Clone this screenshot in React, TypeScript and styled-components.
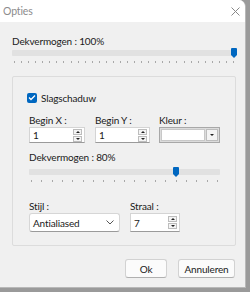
import React from 'react';
import styled, { createGlobalStyle } from 'styled-components';

const Global = createGlobalStyle`
  html, body {
    margin: 0;
    padding: 0;
    background: #9a9a9a;
    font-family: Lato, "Liberation Sans", sans-serif;
    font-size: 10px;
    letter-spacing: -0.15px;
    color: #1a1a1a;
  }
`;

const Window = styled.div`
  width: 246px;
  height: 288px;
  background: #f0f0f0;
  border-right: 1px solid #b8b8b8;
  border-bottom: 1px solid #b8b8b8;
  border-top-right-radius: 7px;
  overflow: hidden;
  display: flex;
  flex-direction: column;
  box-sizing: border-box;
`;

const TitleBar = styled.div`
  height: 22px;
  background: #ffffff;
  display: flex;
  align-items: center;
  justify-content: space-between;
  padding: 0 5px 0 3px;
  flex-shrink: 0;
`;

const Title = styled.span`
  color: #8c8c8c;
  font-size: 10.5px;
`;

const Body = styled.div`
  flex: 1;
  display: flex;
  flex-direction: column;
  padding: 13px 0 0 12px;
`;

const Label = styled.div<{ $top?: number }>`
  font-size: 10px;
  line-height: 13px;
  white-space: nowrap;
  margin-top: ${p => p.$top ?? 0}px;
`;

const SliderWrap = styled.div<{ $width: number; $top: number }>`
  position: relative;
  width: ${p => p.$width}px;
  height: 17px;
  margin-top: ${p => p.$top}px;
`;

const Track = styled.div`
  position: absolute;
  left: 0;
  right: 0;
  top: 2px;
  height: 6px;
  background: #e1e1e1;
  border-radius: 1px;
`;

const Ticks = styled.div`
  position: absolute;
  left: 2px;
  right: 2px;
  top: 13px;
  height: 2px;
  display: flex;
  justify-content: space-between;
`;

const Tick = styled.span`
  width: 1px;
  height: 2px;
  background: #a8a8a8;
`;

const Thumb = styled.div`
  position: absolute;
  top: 0;
  width: 6px;
  height: 10px;
  background: #0067c0;
  clip-path: polygon(0 0, 100% 0, 100% 70%, 50% 100%, 0 70%);
  border-radius: 1px;
`;

function Slider({ width, ticks, pos, top }: { width: number; ticks: number; pos: number; top: number }) {
  return (
    <SliderWrap $width={width} $top={top}>
      <Track />
      <Ticks>
        {Array(ticks).fill(null).map((_, i) => <Tick key={i} />)}
      </Ticks>
      <Thumb style={{ left: pos }} />
    </SliderWrap>
  );
}

const Group = styled.fieldset`
  margin: 11px 0 0 0;
  width: 224px;
  height: 170px;
  box-sizing: border-box;
  border: 1px solid #dcdcdc;
  border-radius: 2px;
  padding: 14px 0 0 16px;
  display: flex;
  flex-direction: column;
`;

const CheckRow = styled.label`
  display: flex;
  align-items: center;
  gap: 4px;
  margin-left: -2px;
  height: 13px;
  font-size: 10px;
`;

const CheckBox = styled.span`
  width: 10px;
  height: 10px;
  border-radius: 2px;
  background: #0067c0;
  display: flex;
  align-items: center;
  justify-content: center;
`;

const Row = styled.div<{ $top: number }>`
  display: flex;
  margin-top: ${p => p.$top}px;
`;

const Field = styled.div<{ $width: number; $gap: number }>`
  width: ${p => p.$width}px;
  margin-right: ${p => p.$gap}px;
  display: flex;
  flex-direction: column;
`;

const InputBox = styled.div<{ $height: number }>`
  height: ${p => p.$height}px;
  box-sizing: border-box;
  background: #ffffff;
  border: 1px solid #d4d4d4;
  border-bottom-color: #9a9a9a;
  display: flex;
  align-items: center;
  justify-content: space-between;
  padding-left: 3px;
`;

const SpinButtons = styled.div`
  display: flex;
  flex-direction: column;
  gap: 1px;
  margin-right: 2px;
`;

const SpinBtn = styled.span`
  width: 5px;
  height: 4px;
  border: 1px solid #bdbdbd;
  background: #f4f4f4;
  padding: 0 1px;
  display: flex;
  align-items: center;
  justify-content: center;
`;

const Arrow = styled.span<{ $up: boolean }>`
  width: 0;
  height: 0;
  border-left: 2px solid transparent;
  border-right: 2px solid transparent;
  ${p => p.$up ? 'border-bottom: 2px solid #222;' : 'border-top: 2px solid #222;'}
`;

function Spin({ value, height }: { value: string; height: number }) {
  return (
    <InputBox $height={height}>
      <span>{value}</span>
      <SpinButtons>
        <SpinBtn><Arrow $up /></SpinBtn>
        <SpinBtn><Arrow $up={false} /></SpinBtn>
      </SpinButtons>
    </InputBox>
  );
}

const ColorCombo = styled.div`
  height: 16px;
  box-sizing: border-box;
  border: 1px solid #a8a8a8;
  background: #dcdcdc;
  display: flex;
  align-items: stretch;
  padding: 1px;
  gap: 1px;
`;

const Swatch = styled.div`
  flex: 1;
  background: #ffffff;
  border: 1px solid #c8c8c8;
`;

const DropBtn = styled.div`
  width: 10px;
  background: #f4f4f4;
  border: 1px solid #bdbdbd;
  display: flex;
  align-items: center;
  justify-content: center;
`;

const Select = styled.div`
  height: 19px;
  box-sizing: border-box;
  background: #ffffff;
  border: 1px solid #d6d6d6;
  border-bottom-color: #9a9a9a;
  border-radius: 3px;
  display: flex;
  align-items: center;
  justify-content: space-between;
  padding: 0 5px 0 3px;
`;

const Footer = styled.div`
  width: 224px;
  display: flex;
  justify-content: flex-end;
  gap: 11px;
  margin-top: 13px;
  padding-right: 1px;
  box-sizing: border-box;
`;

const Button = styled.button<{ $width: number }>`
  width: ${p => p.$width}px;
  height: 19px;
  font-family: inherit;
  font-size: 10px;
  letter-spacing: -0.15px;
  color: #1a1a1a;
  background: #fbfbfb;
  border: 1px solid #d2d2d2;
  border-bottom-color: #b0b0b0;
  border-radius: 3px;
  padding: 0;
`;

export default function App() {
  return (
    <>
      <Global />
      <Window>
        <TitleBar>
          <Title>Opties</Title>
          <svg width="9" height="9" viewBox="0 0 9 9">
            <path d="M0.5 0.5 L8.5 8.5 M8.5 0.5 L0.5 8.5" stroke="#888" strokeWidth="1" />
          </svg>
        </TitleBar>
        <Body>
          <Label>Dekvermogen : 100%</Label>
          <Slider width={224} ticks={32} pos={219} top={0} />
          <Group>
            <CheckRow>
              <CheckBox>
                <svg width="8" height="7" viewBox="0 0 8 7">
                  <path d="M1 3.5 L3 5.5 L7 1.5" stroke="#fff" strokeWidth="1.3" fill="none" />
                </svg>
              </CheckBox>
              <span>Slagschaduw</span>
            </CheckRow>
            <Row $top={10}>
              <Field $width={56} $gap={10}>
                <Label>Begin X :</Label>
                <Spin value="1" height={16} />
              </Field>
              <Field $width={55} $gap={9}>
                <Label>Begin Y :</Label>
                <Spin value="1" height={16} />
              </Field>
              <Field $width={61} $gap={0}>
                <Label>Kleur :</Label>
                <ColorCombo>
                  <Swatch />
                  <DropBtn><Arrow $up={false} /></DropBtn>
                </ColorCombo>
              </Field>
            </Row>
            <Label $top={8}>Dekvermogen : 80%</Label>
            <Slider width={191} ticks={19} pos={144} top={3} />
            <Row $top={16}>
              <Field $width={91} $gap={10}>
                <Label>Stijl :</Label>
                <Select>
                  <span>Antialiased</span>
                  <svg width="8" height="5" viewBox="0 0 8 5">
                    <path d="M0.5 0.5 L4 4 L7.5 0.5" stroke="#555" strokeWidth="1" fill="none" />
                  </svg>
                </Select>
              </Field>
              <Field $width={50} $gap={0}>
                <Label>Straal :</Label>
                <Spin value="7" height={19} />
              </Field>
            </Row>
          </Group>
          <Footer>
            <Button $width={42}>Ok</Button>
            <Button $width={57}>Annuleren</Button>
          </Footer>
        </Body>
      </Window>
    </>
  );
}
